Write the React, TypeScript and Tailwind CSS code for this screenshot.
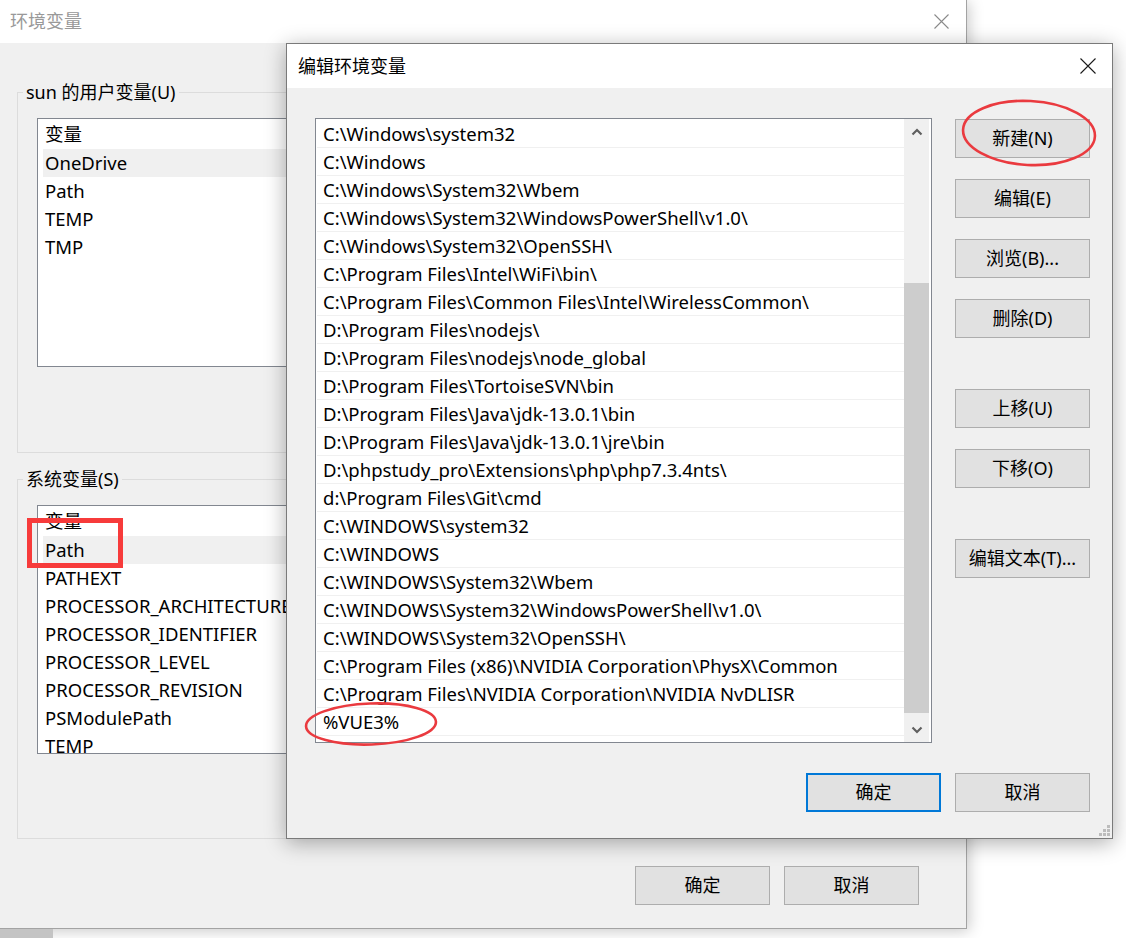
import React from 'react';

const paths = [
  'C:\\Windows\\system32',
  'C:\\Windows',
  'C:\\Windows\\System32\\Wbem',
  'C:\\Windows\\System32\\WindowsPowerShell\\v1.0\\',
  'C:\\Windows\\System32\\OpenSSH\\',
  'C:\\Program Files\\Intel\\WiFi\\bin\\',
  'C:\\Program Files\\Common Files\\Intel\\WirelessCommon\\',
  'D:\\Program Files\\nodejs\\',
  'D:\\Program Files\\nodejs\\node_global',
  'D:\\Program Files\\TortoiseSVN\\bin',
  'D:\\Program Files\\Java\\jdk-13.0.1\\bin',
  'D:\\Program Files\\Java\\jdk-13.0.1\\jre\\bin',
  'D:\\phpstudy_pro\\Extensions\\php\\php7.3.4nts\\',
  'd:\\Program Files\\Git\\cmd',
  'C:\\WINDOWS\\system32',
  'C:\\WINDOWS',
  'C:\\WINDOWS\\System32\\Wbem',
  'C:\\WINDOWS\\System32\\WindowsPowerShell\\v1.0\\',
  'C:\\WINDOWS\\System32\\OpenSSH\\',
  'C:\\Program Files (x86)\\NVIDIA Corporation\\PhysX\\Common',
  'C:\\Program Files\\NVIDIA Corporation\\NVIDIA NvDLISR',
  '%VUE3%',
];

const userVars = ['OneDrive', 'Path', 'TEMP', 'TMP'];
const systemVars = [
  'Path',
  'PATHEXT',
  'PROCESSOR_ARCHITECTURE',
  'PROCESSOR_IDENTIFIER',
  'PROCESSOR_LEVEL',
  'PROCESSOR_REVISION',
  'PSModulePath',
  'TEMP',
];

function CloseIcon({ color, size }: { color: string; size: number }) {
  return (
    <svg width={size} height={size} viewBox={`0 0 ${size} ${size}`}>
      <path d={`M0.5 0.5 L${size - 0.5} ${size - 0.5} M${size - 0.5} 0.5 L0.5 ${size - 0.5}`} stroke={color} strokeWidth="1.1" fill="none" />
    </svg>
  );
}

function WinButton({ label, primary }: { label: string; primary?: boolean }) {
  return (
    <button
      className={
        primary
          ? 'w-[135px] h-[39px] shrink-0 bg-[#e1e1e1] border-2 border-[#0078d7] text-[18px] text-black flex items-center justify-center'
          : 'w-[135px] h-[39px] shrink-0 bg-[#e1e1e1] border border-[#adadad] text-[18px] text-black flex items-center justify-center'
      }
    >
      {label}
    </button>
  );
}

function VarList({ rows }: { rows: string[] }) {
  return (
    <div className="ml-[19px] mr-[18px] mt-[14px] h-[249px] border border-[#828790] bg-white overflow-hidden text-[18.5px]">
      <div className="h-[30px] flex items-center pl-[7px]">变量</div>
      {rows.map((r, i) => (
        <div
          key={r + i}
          className={
            i === 0
              ? 'ml-[5px] h-[28px] flex items-center pl-[2px] bg-[#f0f0f0] whitespace-nowrap'
              : 'ml-[5px] h-[28px] flex items-center pl-[2px] whitespace-nowrap'
          }
        >
          {r}
        </div>
      ))}
    </div>
  );
}

function Chevron({ up }: { up?: boolean }) {
  return (
    <svg width="12" height="8" viewBox="0 0 12 8">
      <path d={up ? 'M1.5 6.5 L6 2 L10.5 6.5' : 'M1.5 1.5 L6 6 L10.5 1.5'} stroke="#606060" strokeWidth="2.2" fill="none" />
    </svg>
  );
}

function ResizeGrip() {
  const dots = [
    [8, 0],
    [4, 4],
    [8, 4],
    [0, 8],
    [4, 8],
    [8, 8],
  ];
  return (
    <svg width="11" height="11" viewBox="0 0 11 11">
      {dots.map(([x, y]) => (
        <rect key={`${x}-${y}`} x={x} y={y} width="3" height="3" fill="#bcbcbc" />
      ))}
    </svg>
  );
}

export default function App() {
  return (
    <div className="relative w-[1126px] h-[938px] bg-white overflow-hidden font-['Noto_Sans','Noto_Sans_CJK_SC',sans-serif] text-[18px] text-black">
      {/* background window: 环境变量 */}
      <div className="absolute left-0 top-0 w-[967px] h-[929px] bg-[#f0f0f0] border-r border-b border-[#a3a3a3] shadow-[2px_2px_14px_rgba(0,0,0,0.22)] flex flex-col">
        <div className="h-[43px] shrink-0 bg-white flex items-center justify-between pl-[10px] pr-[17px]">
          <span className="text-[#999999] text-[18px]">环境变量</span>
          <CloseIcon color="#8a8a8a" size={15} />
        </div>
        <div className="flex-1 flex flex-col">
          <fieldset className="mx-[17px] mt-[37px] pb-[85px] border border-[#dcdcdc]">
            <legend className="ml-[5px] px-[3px] leading-[24px]">sun 的用户变量(U)</legend>
            <VarList rows={userVars} />
          </fieldset>
          <fieldset className="mx-[17px] mt-[14px] pb-[84px] border border-[#dcdcdc]">
            <legend className="ml-[5px] px-[3px] leading-[24px]">系统变量(S)</legend>
            <VarList rows={systemVars} />
          </fieldset>
          <div className="mt-[27px] pr-[47px] flex justify-end gap-[14px]">
            <WinButton label="确定" />
            <WinButton label="取消" />
          </div>
        </div>
      </div>
      <div className="absolute left-0 top-[929px] w-[53px] h-[9px] bg-[#c4c4c4]" />

      {/* dialog: 编辑环境变量 */}
      <div className="absolute left-[286px] top-[43px] w-[827px] h-[796px] bg-[#f0f0f0] border border-[#7a7a7a] shadow-[0_4px_20px_rgba(0,0,0,0.32)] flex flex-col">
        <div className="h-[44px] shrink-0 bg-white flex items-center justify-between pl-[11px] pr-[16px]">
          <span className="text-[18px]">编辑环境变量</span>
          <CloseIcon color="#1a1a1a" size={16} />
        </div>
        <div className="relative flex-1 flex flex-col pt-[30px] pl-[28px] pr-[22px] pb-[25px]">
          <div className="flex">
            <div className="w-[617px] h-[625px] shrink-0 border border-[#828790] bg-white flex pr-[2px]">
              <div className="flex-1 pt-[1px] overflow-hidden text-[18.5px]">
                {paths.map((p, i) => (
                  <div key={i} className="h-[28px] ml-[1px] border-b border-[#f0f0f0] flex items-center pl-[6px] whitespace-nowrap">
                    {p}
                  </div>
                ))}
              </div>
              <div className="w-[25px] shrink-0 bg-[#f0f0f0] flex flex-col">
                <div className="h-[25px] flex items-center justify-center">
                  <Chevron up />
                </div>
                <div className="flex-1">
                  <div className="mt-[139px] h-[430px] bg-[#cdcdcd]" />
                </div>
                <div className="h-[25px] flex items-center justify-center">
                  <Chevron />
                </div>
              </div>
            </div>
            <div className="ml-[23px] mt-[1px] flex flex-col">
              <WinButton label="新建(N)" />
              <div className="mt-[21px]"><WinButton label="编辑(E)" /></div>
              <div className="mt-[21px]"><WinButton label="浏览(B)..." /></div>
              <div className="mt-[21px]"><WinButton label="删除(D)" /></div>
              <div className="mt-[51px]"><WinButton label="上移(U)" /></div>
              <div className="mt-[21px]"><WinButton label="下移(O)" /></div>
              <div className="mt-[51px]"><WinButton label="编辑文本(T)..." /></div>
            </div>
          </div>
          <div className="mt-[30px] flex justify-end gap-[14px]">
            <WinButton label="确定" primary />
            <WinButton label="取消" />
          </div>
          <div className="absolute right-[2px] bottom-[2px]">
            <ResizeGrip />
          </div>
        </div>
      </div>

      {/* red annotations */}
      <svg className="absolute left-0 top-0 pointer-events-none" width="1126" height="938" viewBox="0 0 1126 938">
        <rect x="29.5" y="520.5" width="91" height="45" fill="none" stroke="#f73b3b" strokeWidth="5" />
        <ellipse cx="1029" cy="133" rx="66" ry="32" fill="none" stroke="#ea3a3f" strokeWidth="2.6" transform="rotate(3 1029 133)" />
        <ellipse cx="371" cy="724" rx="65" ry="20.5" fill="none" stroke="#ea3a3f" strokeWidth="2.6" transform="rotate(-2 371 724)" />
      </svg>
    </div>
  );
}
